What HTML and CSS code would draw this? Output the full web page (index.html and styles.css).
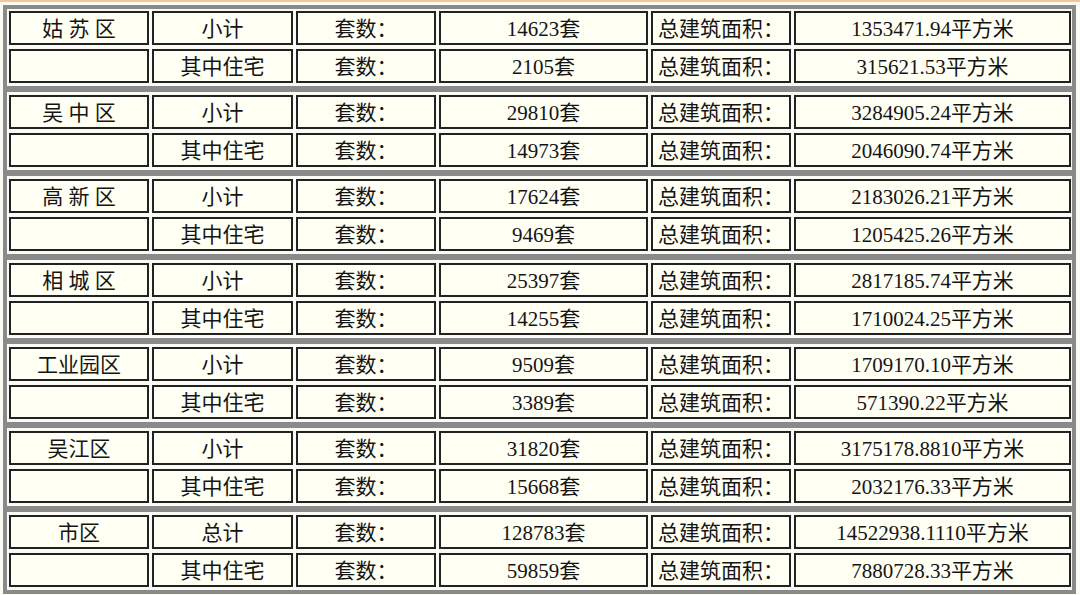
FILE: index.html
```html
<!DOCTYPE html>
<html lang="zh-CN">
<head>
<meta charset="utf-8">
<title>苏州房屋统计</title>
<link rel="stylesheet" href="styles.css">
</head>
<body>
<div class="strip"></div>
<div class="frame">
  <div class="block">
    <div class="cell">姑 苏 区</div><div class="cell">小计</div><div class="cell">套数：</div><div class="cell">14623套</div><div class="cell">总建筑面积：</div><div class="cell">1353471.94平方米</div>
    <div class="cell"></div><div class="cell">其中住宅</div><div class="cell">套数：</div><div class="cell">2105套</div><div class="cell">总建筑面积：</div><div class="cell">315621.53平方米</div>
  </div>
  <div class="block">
    <div class="cell">吴 中 区</div><div class="cell">小计</div><div class="cell">套数：</div><div class="cell">29810套</div><div class="cell">总建筑面积：</div><div class="cell">3284905.24平方米</div>
    <div class="cell"></div><div class="cell">其中住宅</div><div class="cell">套数：</div><div class="cell">14973套</div><div class="cell">总建筑面积：</div><div class="cell">2046090.74平方米</div>
  </div>
  <div class="block">
    <div class="cell">高 新 区</div><div class="cell">小计</div><div class="cell">套数：</div><div class="cell">17624套</div><div class="cell">总建筑面积：</div><div class="cell">2183026.21平方米</div>
    <div class="cell"></div><div class="cell">其中住宅</div><div class="cell">套数：</div><div class="cell">9469套</div><div class="cell">总建筑面积：</div><div class="cell">1205425.26平方米</div>
  </div>
  <div class="block">
    <div class="cell">相 城 区</div><div class="cell">小计</div><div class="cell">套数：</div><div class="cell">25397套</div><div class="cell">总建筑面积：</div><div class="cell">2817185.74平方米</div>
    <div class="cell"></div><div class="cell">其中住宅</div><div class="cell">套数：</div><div class="cell">14255套</div><div class="cell">总建筑面积：</div><div class="cell">1710024.25平方米</div>
  </div>
  <div class="block">
    <div class="cell">工业园区</div><div class="cell">小计</div><div class="cell">套数：</div><div class="cell">9509套</div><div class="cell">总建筑面积：</div><div class="cell">1709170.10平方米</div>
    <div class="cell"></div><div class="cell">其中住宅</div><div class="cell">套数：</div><div class="cell">3389套</div><div class="cell">总建筑面积：</div><div class="cell">571390.22平方米</div>
  </div>
  <div class="block">
    <div class="cell">吴江区</div><div class="cell">小计</div><div class="cell">套数：</div><div class="cell">31820套</div><div class="cell">总建筑面积：</div><div class="cell">3175178.8810平方米</div>
    <div class="cell"></div><div class="cell">其中住宅</div><div class="cell">套数：</div><div class="cell">15668套</div><div class="cell">总建筑面积：</div><div class="cell">2032176.33平方米</div>
  </div>
  <div class="block">
    <div class="cell">市区</div><div class="cell">总计</div><div class="cell">套数：</div><div class="cell">128783套</div><div class="cell">总建筑面积：</div><div class="cell">14522938.1110平方米</div>
    <div class="cell"></div><div class="cell">其中住宅</div><div class="cell">套数：</div><div class="cell">59859套</div><div class="cell">总建筑面积：</div><div class="cell">7880728.33平方米</div>
  </div>
</div>
</body>
</html>
```
FILE: styles.css
```css
html, body {
  margin: 0;
  padding: 0;
  background: #fbfbf6;
  overflow: hidden;
}
body {
  width: 1080px;
  height: 595px;
  font-family: "Liberation Serif", "Noto Sans CJK SC", serif;
  font-size: 21px;
  color: #141414;
}
.strip {
  height: 2px;
  background: #f3c697;
}
.frame {
  margin: 3px 4px 0 3px;
  border: 4px solid #8a8a8a;
}
.block {
  display: grid;
  grid-template-columns: 140px 141px 140px 209px 140px 277px;
  grid-auto-rows: 34px;
  gap: 4px 3px;
  padding: 3px 2px;
}
.block:first-child {
  padding-top: 2px;
}
.block + .block {
  border-top: 6px solid #8a8a8a;
}
.cell {
  box-sizing: border-box;
  border: 2px solid #222;
  background: #fffff4;
  display: flex;
  align-items: center;
  justify-content: center;
  white-space: nowrap;
  line-height: 1;
  padding-top: 2px;
}
```
